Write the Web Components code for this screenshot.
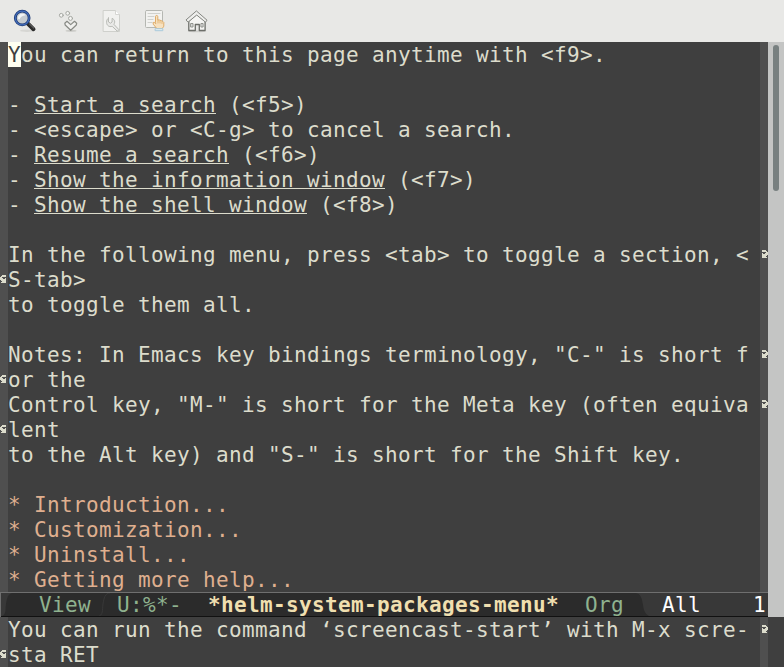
<!DOCTYPE html>
<html lang="en"><head><meta charset="utf-8"><title>Emacs</title>
<style>html,body{margin:0;background:#3f3f3f}body{width:784px;height:667px;overflow:hidden}</style></head>
<body><emacs-frame></emacs-frame>
<script>
const define=(name,html)=>customElements.define(name,class extends HTMLElement{
  constructor(){super();this.attachShadow({mode:'open'}).innerHTML=html;}
});

define('tool-button','<style>:host{display:block;width:24px;height:24px}::slotted(svg){display:block;width:24px;height:24px}</style><slot></slot>');

define('tool-bar',`<style>
:host{display:flex;gap:19px;height:42px;box-sizing:border-box;padding:9px 0 0 13px;background:#e8e8e6}
svg{fill:none;stroke-linecap:round;stroke-linejoin:round}
</style>
<tool-button><svg viewBox="0 0 24 24"><ellipse cx="14" cy="21.7" rx="7" ry="1.2" fill="#d6d6d3"/><path d="M15 14.8L20.5 20.2" stroke="#2b2b2b" stroke-width="4"/><path d="M16.5 15L20.8 19.2" stroke="#777" stroke-width="1"/><circle cx="9.2" cy="9" r="6.9" fill="#c5cbd0" stroke="#203b75" stroke-width="2.8"/><circle cx="9.2" cy="9" r="6.9" stroke="#426dbb" stroke-width="1.2"/><path d="M4.8 9.5Q5 5 9.2 4.8Q11.6 4.8 12.6 6.2Q8 6.5 6.5 10.6Z" fill="#f2f4f5"/></svg></tool-button>
<tool-button><svg viewBox="0 0 24 24"><ellipse cx="15" cy="21.8" rx="5.5" ry=".9" fill="#c6c6c2"/><g stroke="#a5a7a2" fill="#f5f5f3" stroke-width="1"><circle cx="5.3" cy="6.3" r="1.9"/><circle cx="11.7" cy="4.3" r="1.9"/><circle cx="14.5" cy="9.4" r="2"/></g><path d="M8.8 14.2L11 12.3L14.7 15.6L18.5 12.3L20.7 14.2L20.3 16L14.7 21.3L9.2 16Z" stroke="#888a85" fill="#f0f0ee" stroke-width="1.2"/></svg></tool-button>
<tool-button><svg viewBox="0 0 24 24"><path d="M4.5 1.5h12l4 4v17h-16z" fill="#f1f1ef" stroke="#cfd0cc"/><path d="M16.5 1.5v4h4" fill="#fff" stroke="#d6d6d3"/><path d="M9.5 9v4l2 1.2 1.6-1.2V9.3c3 1.4 3 4.2 1.8 6l5 5.4-1.5 1.6-5.2-5c-3 1-5.6-.8-5.6-4 0-1.8.5-3.3 1.9-4.3z" fill="#e9e9e7" stroke="#b8bab5"/></svg></tool-button>
<tool-button><svg viewBox="0 0 24 24"><rect x="3.5" y="1.5" width="17" height="17" rx="1" fill="#f2f2f0" stroke="#b5b7b2"/><path d="M6 4.5h12M6 7.5h6M6 10.5h5M6 13.5h4" stroke="#d0d1cd"/><path d="M13.5 13V7.5c0-1.4 2.3-1.4 2.3 0V11h1.7l1.6.6 1.7.8 1 1v3.8l-1.5 2.3h-5.5l-3.6-4.3v-1.8h1.5l.8 1z" fill="#f7e1bf" stroke="#dfac68"/><path d="M16 11v3M18 12v2M20 13v1.5" stroke="#dfac68" stroke-width=".8"/><path d="M13.5 19.7h7.3v2h-7.3z" fill="#e4f0f5" stroke="#a9c9da"/></svg></tool-button>
<tool-button><svg viewBox="0 0 24 24"><ellipse cx="12" cy="22.3" rx="9.5" ry=".9" fill="#cececb"/><path d="M3.8 12v9.5h6.5v-6h4v6h5.8V12L11.8 5z" fill="#f5f5f3" stroke="#6c6e69" stroke-width="1.3"/><path d="M11.7 2.2L22 11.2L20.5 13.2L11.7 6L3 13.2L1.3 11.2Z" fill="#eeeeec" stroke="#858782"/><path d="M6 14.5h2v3.5H6zM16.3 14.5h1.8v3.5h-1.8z" stroke="#888a85" stroke-width=".9" fill="#ddd"/></svg></tool-button>`);

/* One screen row: left fringe, text cells, right fringe; wrap="l" or "r" draws the continuation arrow. */
define('text-row',`<style>
:host{display:grid;grid-template-columns:8px 752px 8px;height:25px;width:768px}
.f{background:#4f4f4f;height:25px}
.t{white-space:pre;line-height:27px;height:25px}
svg{display:none;width:8px;height:25px;fill:#dcdccc;shape-rendering:crispEdges}
:host([wrap="l"]) .l svg,:host([wrap="r"]) .r svg{display:block}
::slotted(u){text-decoration:none;display:inline-block;height:22px;line-height:27px;border-bottom:1px solid #dcdccc;box-sizing:border-box;vertical-align:top}
::slotted(mark){display:inline-block;vertical-align:top;width:13px;height:25px;background:#fffff0;color:#3f3f3f}
</style><div class="f l"><svg viewBox="0 0 8 25"><path d="M2 8h4v1H2zM1 9h5v1H1zM0 10h2v1H0zM0 11h3v1H0zM5 11h1v1H5zM0 12h6v1H0zM1 13h5v1H1zM2 14h4v1H2zM1 15h5v1H1z"/></svg></div><div class="t"><slot></slot></div><div class="f r"><svg viewBox="0 0 8 25"><path d="M2 8h4v1H2zM2 9h5v1H2zM6 10h2v1H6zM2 11h1v1H2zM5 11h3v1H5zM2 12h6v1H2zM2 13h5v1H2zM2 14h4v1H2zM2 15h5v1H2z"/></svg></div>`);

define('scroll-bar','<style>:host{display:block;width:16px;height:575px;background:#c4c5c4;box-sizing:border-box;padding:3px 0 0 5px}i{display:block;width:6px;height:146px;border-radius:3px;background:#788080}</style><i></i>');

define('mode-line',`<style>
:host{display:grid;grid-template-columns:39px 78px 91px 377px 77px 91px 15px;position:relative;height:25px;width:768px;box-sizing:border-box;background:#383838;line-height:27px;color:#8fb28f;white-space:pre;overflow:hidden}
svg{position:absolute;left:0;top:0}span{position:relative}
b{position:relative;color:#f0dfaf}.w{color:#fff}
</style><svg width="768" height="25"><path d="M0 25C7 23 5 18 6 12S8 1 13 1H635C641 1 642 7 643 13S645 23 652 25Z" fill="#2b2b2b"/><path d="M97 25C104 23 102 18 103 12S105 1 110 1" fill="none" stroke="#383838"/><path d="M0 .5H768" stroke="#6f6f6f"/><path d="M0 24.5H768" stroke="#111"/><path d="M.5 0V25" stroke="#6f6f6f"/></svg><span></span><span>View</span><span>U:%*-</span><b>*helm-system-packages-menu*</b><span>Org</span><span class="w">All</span><span class="w">1</span>`);

define('emacs-frame',`<style>
:host{display:block;width:784px;height:667px;background:#3f3f3f;color:#dcdccc;font:21px/25px "DejaVu Sans Mono",monospace;letter-spacing:.357px;overflow:hidden}
.w{display:flex}.h{color:#dfaf8f}
</style><tool-bar></tool-bar>
<div class="w"><main>
<text-row><mark>Y</mark>ou can return to this page anytime with &lt;f9&gt;.</text-row>
<text-row></text-row>
<text-row>- <u>Start a search</u> (&lt;f5&gt;)</text-row>
<text-row>- &lt;escape&gt; or &lt;C-g&gt; to cancel a search.</text-row>
<text-row>- <u>Resume a search</u> (&lt;f6&gt;)</text-row>
<text-row>- <u>Show the information window</u> (&lt;f7&gt;)</text-row>
<text-row>- <u>Show the shell window</u> (&lt;f8&gt;)</text-row>
<text-row></text-row>
<text-row wrap="r">In the following menu, press &lt;tab&gt; to toggle a section, &lt;</text-row>
<text-row wrap="l">S-tab&gt;</text-row>
<text-row>to toggle them all.</text-row>
<text-row></text-row>
<text-row wrap="r">Notes: In Emacs key bindings terminology, "C-" is short f</text-row>
<text-row wrap="l">or the</text-row>
<text-row wrap="r">Control key, "M-" is short for the Meta key (often equiva</text-row>
<text-row wrap="l">lent</text-row>
<text-row>to the Alt key) and "S-" is short for the Shift key.</text-row>
<text-row></text-row>
<text-row class="h">* Introduction...</text-row>
<text-row class="h">* Customization...</text-row>
<text-row class="h">* Uninstall...</text-row>
<text-row class="h">* Getting more help...</text-row>
<mode-line></mode-line></main><scroll-bar></scroll-bar></div>
<text-row wrap="r">You can run the command ‘screencast-start’ with M-x scre-</text-row>
<text-row wrap="l">sta RET</text-row>`);
</script></body></html>
